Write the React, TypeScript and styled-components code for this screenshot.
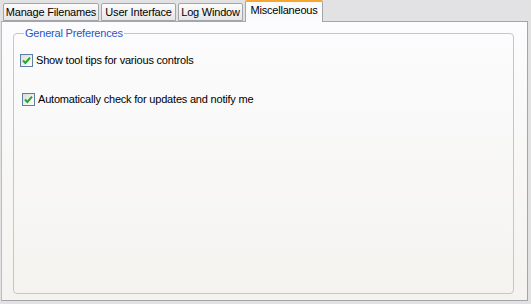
import styled, { createGlobalStyle } from "styled-components";

const GlobalStyle = createGlobalStyle`
  html, body {
    margin: 0;
    padding: 0;
    background: #e2e2e4;
  }
  body {
    font-family: "Liberation Sans", Tahoma, Arial, sans-serif;
    font-size: 11px;
    letter-spacing: -0.2px;
    color: #000;
  }
`;

const Window = styled.div`
  width: 531px;
  height: 304px;
  display: flex;
  flex-direction: column;
  background: #e2e2e4;
  box-sizing: border-box;
  padding: 0 3px 3px 1px;
`;

const TabStrip = styled.div`
  display: flex;
  align-items: flex-end;
  height: 21px;
  padding-left: 2px;
  gap: 2px;
  position: relative;
  z-index: 1;
`;

const Tab = styled.div<{ $active?: boolean; $w: number }>`
  box-sizing: border-box;
  width: ${(p) => p.$w}px;
  text-align: center;
  height: ${(p) => (p.$active ? "22px" : "18px")};
  padding-top: 2px;
  margin-bottom: ${(p) => (p.$active ? "-1px" : "0")};
  border: 1px solid #a4a5a9;
  border-bottom: ${(p) => (p.$active ? "none" : "1px solid #a4a5a9")};
  border-top: ${(p) => (p.$active ? "2px solid #f7a632" : "1px solid #a4a5a9")};
  border-radius: 2px 2px 0 0;
  background: ${(p) =>
    p.$active ? "#fbfbfc" : "linear-gradient(#fcfcfc, #e6e6ea)"};
  white-space: nowrap;
  color: #000;
`;

const Panel = styled.div`
  flex: 1;
  box-sizing: border-box;
  border: 1px solid #a4a5a9;
  border-left-color: #b9bbd6;
  background: linear-gradient(#fcfcfe, #f4f3ef);
  padding: 5px 13px 6px 11px;
  display: flex;
`;

const Group = styled.fieldset`
  flex: 1;
  margin: 0;
  box-sizing: border-box;
  border: 1px solid #c6c6c6;
  border-radius: 4px;
  padding: 14px 6px 0 6px;
  display: flex;
  flex-direction: column;
  align-items: flex-start;
`;

const Legend = styled.legend`
  color: #2b55c7;
  padding: 0 1px;
  margin-left: 4px;
  line-height: 13px;
`;

const Option = styled.label<{ $indent?: number }>`
  display: flex;
  align-items: center;
  gap: 3px;
  line-height: 13px;
  margin-left: ${(p) => p.$indent ?? 0}px;
  margin-bottom: ${(p) => (p.$indent ? 0 : 26)}px;
`;

const Box = styled.span`
  width: 11px;
  height: 11px;
  border: 1px solid #5d7fa6;
  background: linear-gradient(135deg, #dcdcd7, #ffffff);
  display: inline-flex;
  align-items: center;
  justify-content: center;
`;

const Check = () => (
  <Box>
    <svg width="9" height="9" viewBox="0 0 9 9">
      <path d="M1 4.5 L3.4 7 L8 1.6" fill="none" stroke="#2aa52a" strokeWidth="2" />
    </svg>
  </Box>
);

export default function App() {
  return (
    <Window>
      <GlobalStyle />
      <TabStrip>
        <Tab $w={96}>Manage Filenames</Tab>
        <Tab $w={75}>User Interface</Tab>
        <Tab $w={65}>Log Window</Tab>
        <Tab $w={78} $active>Miscellaneous</Tab>
      </TabStrip>
      <Panel>
        <Group>
          <Legend>General Preferences</Legend>
          <Option>
            <Check />
            Show tool tips for various controls
          </Option>
          <Option $indent={2}>
            <Check />
            Automatically check for updates and notify me
          </Option>
        </Group>
      </Panel>
    </Window>
  );
}
